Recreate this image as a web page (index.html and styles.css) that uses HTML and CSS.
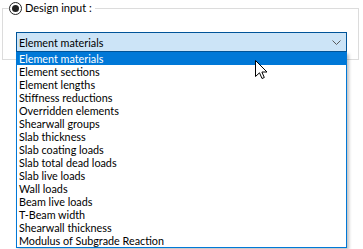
FILE: index.html
```html
<!DOCTYPE html>
<html lang="en">
<head>
    <meta charset="UTF-8">
    <title>Design input</title>
    <link rel="stylesheet" href="styles.css">
</head>
<body>
    <fieldset class="group">
        <legend class="group-title">
            <span class="radio"><span class="radio-dot"></span></span>
            <span>Design input :</span>
        </legend>
        <div class="combo">
            <span class="combo-text">Element materials</span>
            <svg class="chevron" width="9" height="5" viewBox="0 0 9 5">
                <path d="M0.5 0.5 L4.5 4.5 L8.5 0.5" fill="none" stroke="#5a5a5a" stroke-width="1"/>
            </svg>
        </div>
    </fieldset>
    <ul class="dropdown">
        <li class="item selected">Element materials</li>
        <li class="item">Element sections</li>
        <li class="item">Element lengths</li>
        <li class="item">Stiffness reductions</li>
        <li class="item">Overridden elements</li>
        <li class="item">Shearwall groups</li>
        <li class="item">Slab thickness</li>
        <li class="item">Slab coating loads</li>
        <li class="item">Slab total dead loads</li>
        <li class="item">Slab live loads</li>
        <li class="item">Wall loads</li>
        <li class="item">Beam live loads</li>
        <li class="item">T-Beam width</li>
        <li class="item">Shearwall thickness</li>
        <li class="item">Modulus of Subgrade Reaction</li>
    </ul>
    <svg class="cursor" width="13" height="20" viewBox="0 0 13 20">
        <path d="M0.5 0.5 L0.5 16.5 L4.5 12.8 L7 18.5 L9.3 17.5 L6.9 12 L12 12 Z" fill="#fff" stroke="#000" stroke-width="1" stroke-linejoin="miter"/>
    </svg>
</body>
</html>
```

FILE: styles.css
```css
body {
    margin: 0;
    width: 363px;
    height: 249px;
    overflow: hidden;
    background-color: #fff;
    font-family: Lato, sans-serif;
    font-size: 10.8px;
    color: #000;
    position: relative;
}
.group {
    margin: 1px 4px 0 2px;
    padding: 17px 11px 0 13px;
    height: 40px;
    border: 1px solid #dcdcdc;
}
.group-title {
    display: flex;
    align-items: center;
    gap: 3px;
    padding: 0 3px 0 0;
    margin-left: -7px;
    height: 14px;
    line-height: 14px;
    font-size: 11px;
}
.radio {
    width: 11px;
    height: 11px;
    border: 1px solid #222;
    border-radius: 50%;
    display: flex;
    justify-content: center;
    align-items: center;
}
.radio-dot {
    width: 7px;
    height: 7px;
    border-radius: 50%;
    background-color: #222;
}
.combo {
    height: 18px;
    border: 1px solid #005499;
    background-color: #cce4f7;
    display: flex;
    align-items: center;
    justify-content: space-between;
    padding: 0 5px 0 2px;
    line-height: 13px;
}
.chevron {
    display: block;
}
.dropdown {
    position: absolute;
    left: 16px;
    top: 52px;
    width: 329px;
    margin: 0;
    padding: 0;
    list-style: none;
    border: 1px solid #0078d7;
    border-top: none;
    background-color: #fff;
    box-shadow: 2px 2px 3px rgba(0, 0, 0, 0.25);
}
.item {
    height: 13px;
    line-height: 13px;
    padding-left: 2px;
    white-space: nowrap;
}
.item.selected {
    background-color: #0078d7;
    color: #fff;
}
.cursor {
    position: absolute;
    left: 255px;
    top: 60px;
}
```
